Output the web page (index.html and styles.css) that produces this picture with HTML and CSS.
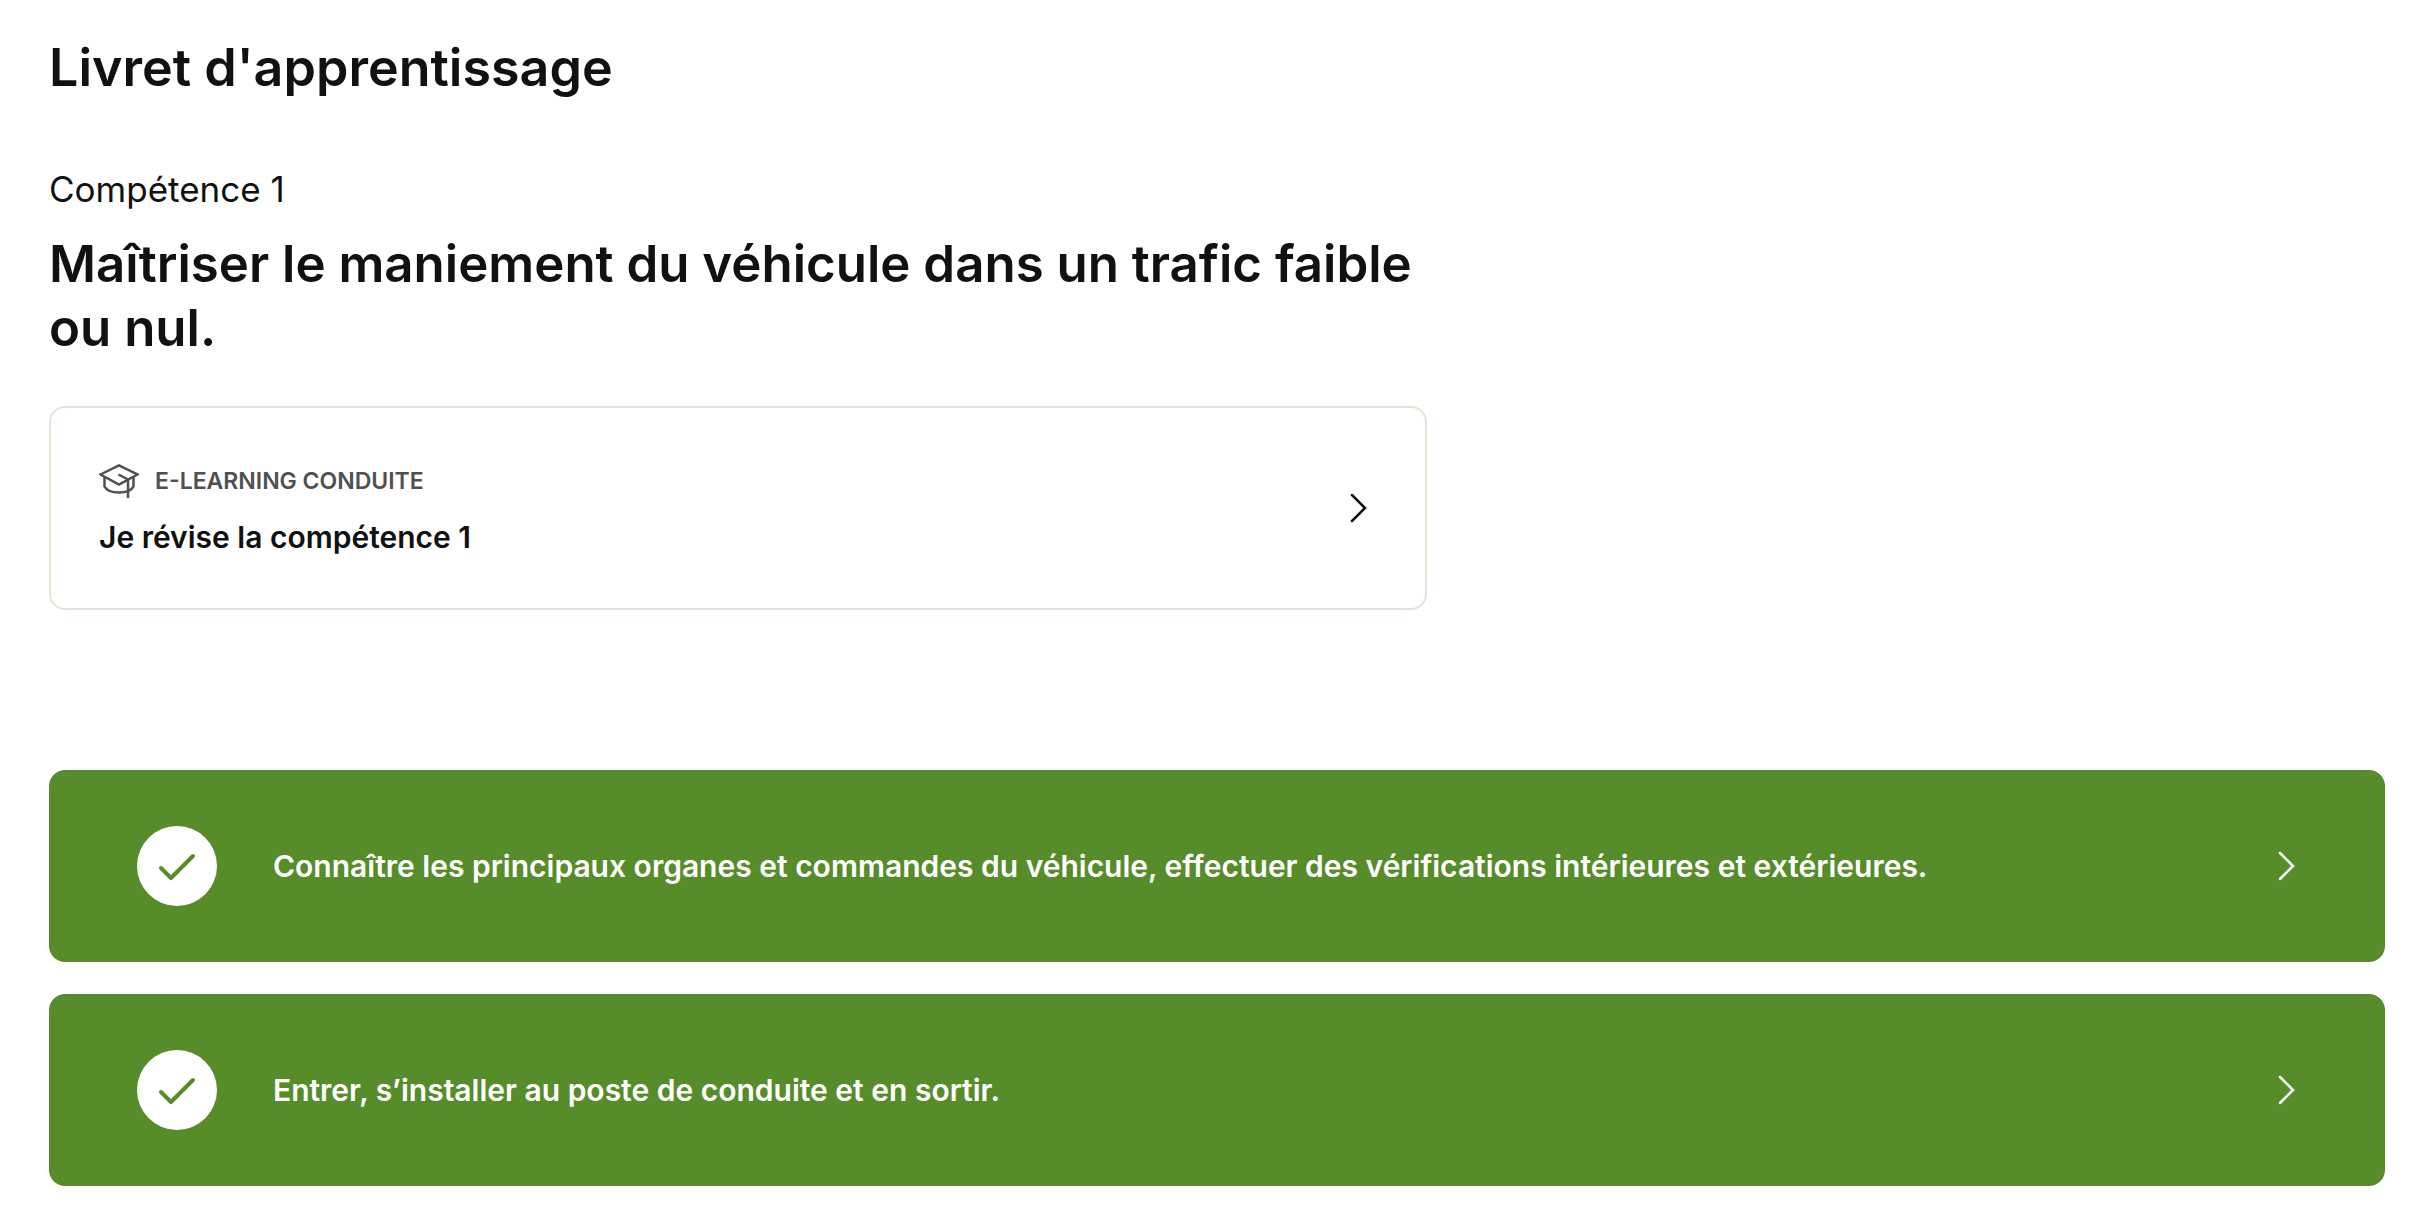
FILE: index.html
```html
<!DOCTYPE html>
<html lang="fr">
<head>
  <meta charset="utf-8">
  <meta name="viewport" content="width=device-width, initial-scale=1">
  <title>Livret d'apprentissage</title>
  <link rel="stylesheet" href="styles.css">
</head>
<body>
  <main class="page">
    <h1 class="page-title">Livret d'apprentissage</h1>

    <section class="skill">
      <header class="skill-header">
        <p class="skill-number">Compétence 1</p>
        <h2 class="skill-title">Maîtriser le maniement du véhicule dans un trafic faible ou nul.</h2>
      </header>

      <a class="lesson-card" href="#reviser">
        <span class="lesson-body">
          <span class="lesson-type">
            <svg class="cap-icon" viewBox="0 0 40 34" aria-hidden="true">
              <path d="M1.500 10.500 20 1.500l18.500 9L20 20.500z M5.500 13v9.500c2 4 8 6 14.500 6s12.500-2 14.500-6V13 M19.500 10.500 29 15.500V34"/>
            </svg>
            E-LEARNING CONDUITE
          </span>
          <span class="lesson-name">Je révise la compétence 1</span>
        </span>
        <svg class="chevron" viewBox="0 0 20 32" aria-hidden="true"><path d="M3 3l13 13L3 29"/></svg>
      </a>
    </section>

    <ul class="goals">
      <li>
        <a class="goal" href="#organes">
          <span class="goal-status">
            <svg class="check" viewBox="0 0 40 32" aria-hidden="true"><path d="M4 18l10 10L36 6"/></svg>
          </span>
          <span class="goal-name">Connaître les principaux organes et commandes du véhicule, effectuer des vérifications intérieures et extérieures.</span>
          <svg class="chevron" viewBox="0 0 20 32" aria-hidden="true"><path d="M3 3l13 13L3 29"/></svg>
        </a>
      </li>
      <li>
        <a class="goal" href="#installation">
          <span class="goal-status">
            <svg class="check" viewBox="0 0 40 32" aria-hidden="true"><path d="M4 18l10 10L36 6"/></svg>
          </span>
          <span class="goal-name">Entrer, s’installer au poste de conduite et en sortir.</span>
          <svg class="chevron" viewBox="0 0 20 32" aria-hidden="true"><path d="M3 3l13 13L3 29"/></svg>
        </a>
      </li>
    </ul>
  </main>
</body>
</html>
```

FILE: styles.css
```css
* {
  box-sizing: border-box;
}

body {
  margin: 0;
  background: #fff;
  color: #111;
  font-family: Inter, "Liberation Sans", sans-serif;
}

h1,
h2,
p,
ul {
  margin: 0;
  padding: 0;
}

a {
  color: inherit;
  text-decoration: none;
}

.page {
  padding: 36px 49px 22px;
}

.page-title,
.skill-title {
  font-size: 52px;
  font-weight: 600;
  line-height: 64px;
}

.skill-title {
  font-size: 51px;
}

.skill {
  display: flex;
  flex-direction: column;
  gap: 46px;
  width: 59%;
  margin-top: 66px;
}

.skill-header {
  display: flex;
  flex-direction: column;
  gap: 20px;
}

.skill-number {
  font-size: 35px;
  line-height: 46px;
}

.lesson-card {
  display: flex;
  align-items: center;
  justify-content: space-between;
  gap: 32px;
  padding: 53px 56px 53px 48px;
  border: 2px solid #e8e2d5;
  border-radius: 16px;
}

.lesson-body {
  display: flex;
  flex-direction: column;
  gap: 18px;
}

.lesson-type {
  display: flex;
  align-items: center;
  gap: 16px;
  color: #505050;
  font-size: 23px;
  font-weight: 600;
  line-height: 40px;
}

.lesson-name {
  font-size: 30px;
  font-weight: 600;
  line-height: 36px;
}

.cap-icon {
  flex: none;
  width: 40px;
  height: 34px;
  fill: none;
  stroke: currentColor;
  stroke-width: 2.5;
}

.chevron {
  flex: none;
  width: 20px;
  height: 32px;
  fill: none;
  stroke: currentColor;
  stroke-width: 2.5;
  stroke-linecap: round;
}

.goals {
  display: flex;
  flex-direction: column;
  gap: 32px;
  margin-top: 160px;
  list-style: none;
}

.goal {
  display: flex;
  align-items: center;
  gap: 56px;
  padding: 56px 88px;
  border-radius: 16px;
  background: #578c2a;
  color: #fff;
}

.goal-status {
  display: flex;
  flex: none;
  align-items: center;
  justify-content: center;
  width: 80px;
  height: 80px;
  border-radius: 50%;
  background: #fff;
  color: #578c2a;
}

.check {
  width: 40px;
  height: 32px;
  fill: none;
  stroke: currentColor;
  stroke-width: 4;
  stroke-linecap: round;
  stroke-linejoin: round;
}

.goal-name {
  flex: 1;
  font-size: 30px;
  font-weight: 600;
  line-height: 40px;
}
```
